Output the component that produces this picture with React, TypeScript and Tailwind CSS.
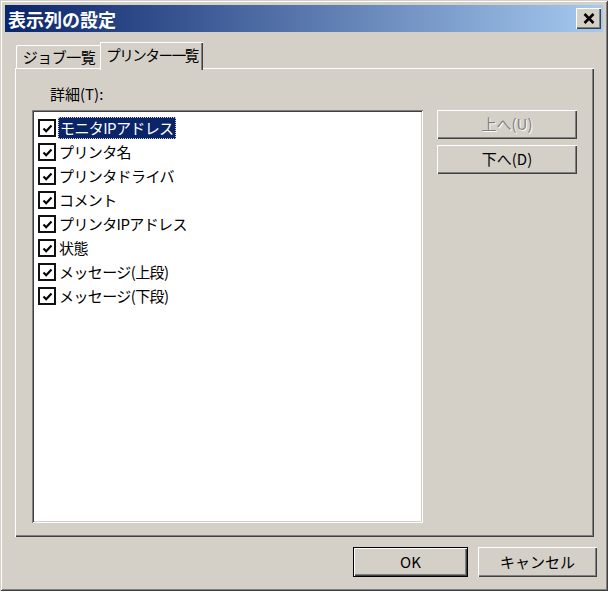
const items = [
  "モニタIPアドレス",
  "プリンタ名",
  "プリンタドライバ",
  "コメント",
  "プリンタIPアドレス",
  "状態",
  "メッセージ(上段)",
  "メッセージ(下段)",
];

// --- raised / sunken win2000 edges ---
const raised =
  "shadow-[inset_1px_1px_#ffffff,inset_-1px_-1px_#404040,inset_-2px_-2px_#808080]";
const sunken =
  "shadow-[inset_1px_1px_#808080,inset_-1px_-1px_#ffffff,inset_2px_2px_#404040,inset_-2px_-2px_#d4d0c8]";

function CheckBox() {
  return (
    <div className="w-[18px] h-[18px] border-[2.5px] border-[#111] bg-white flex items-center justify-center shrink-0">
      <svg width="11" height="11" viewBox="0 0 11 11">
        <path d="M1.5 5.5 L4.2 8.2 L9.5 2.5" stroke="#000" strokeWidth="2.2" fill="none" />
      </svg>
    </div>
  );
}

export default function App() {
  return (
    <div className="w-[611px] h-[593px] bg-white [font-family:'Noto_Sans_CJK_JP',sans-serif] text-black">
      <div
        className={`w-[608px] h-[591px] bg-[#d4d0c8] p-[5px] flex flex-col shadow-[inset_1px_1px_#d4d0c8,inset_-1px_-1px_#404040,inset_2px_2px_#ffffff,inset_-2px_-2px_#808080]`}
      >
        {/* title bar */}
        <div className="h-[27px] bg-[linear-gradient(to_right,#0a246a,#a6caf0)] flex items-center justify-between pl-[3px] pr-[2px]">
          <span className="text-white font-bold text-[18px] leading-none">表示列の設定</span>
          <div className={`w-[25px] h-[21px] bg-[#d4d0c8] flex items-center justify-center ${raised}`}>
            <svg width="12" height="11" viewBox="0 0 12 11">
              <path d="M1.5 1 L10.5 10 M10.5 1 L1.5 10" stroke="#000" strokeWidth="2.6" />
            </svg>
          </div>
        </div>

        {/* tabs */}
        <div className="flex items-end h-[26px] mt-[10px] ml-[11px] text-[15px]">
          <div className="h-[23px] w-[85px] flex items-center justify-center border-t border-l border-white rounded-tl-[2px] tracking-[-0.5px]">
            ジョブ一覧
          </div>
          <div className="relative z-10 h-[28px] -mb-[2px] -ml-[1px] w-[103px] bg-[#d4d0c8] flex items-start pt-[1px] justify-center border-t border-l border-white shadow-[inset_-1px_0_#404040,inset_-2px_0_#808080] text-[14.5px] tracking-[-1.4px]">
            プリンター一覧
          </div>
        </div>

        {/* tab page */}
        <div className={`ml-[10px] w-[579px] h-[469px] flex flex-col pt-[16px] px-[17px] shadow-[inset_1px_1px_#ffffff,inset_-1px_-1px_#404040,inset_-2px_-2px_#808080]`}>
          <div className="ml-[18px] h-[20px] text-[15px] leading-[20px]">詳細(T):</div>
          <div className="flex mt-[6px] gap-[14px]">
            <div className={`w-[391px] h-[413px] bg-white ${sunken} pt-[6px] pl-[6px]`}>
              {items.map((t, i) => (
                <div key={i} className="h-[24px] flex items-center text-[15px]">
                  <CheckBox />
                  {i === 0 ? (
                    <span className="ml-[2px] h-[22px] px-[1px] flex items-center bg-[#0a246a] text-white border border-dotted border-[#d4d0c8] tracking-[-0.6px]">
                      {t}
                    </span>
                  ) : (
                    <span className="ml-[3px] tracking-[-0.6px]">{t}</span>
                  )}
                </div>
              ))}
            </div>
            <div className="flex flex-col gap-[6px]">
              <div className={`w-[140px] h-[29px] flex items-center justify-center text-[15px] text-[#808080] [text-shadow:1px_1px_#ffffff] ${raised}`}>
                上へ(U)
              </div>
              <div className={`w-[140px] h-[29px] flex items-center justify-center text-[15px] ${raised}`}>
                下へ(D)
              </div>
            </div>
          </div>
        </div>

        {/* bottom buttons */}
        <div className="flex mt-[10px] ml-[348px] gap-[10px] text-[15px]">
          <div className={`w-[115px] h-[30px] border border-black flex items-center justify-center ${raised}`}>
            OK
          </div>
          <div className={`w-[119px] h-[30px] flex items-center justify-center ${raised}`}>
            キャンセル
          </div>
        </div>
      </div>
    </div>
  );
}
